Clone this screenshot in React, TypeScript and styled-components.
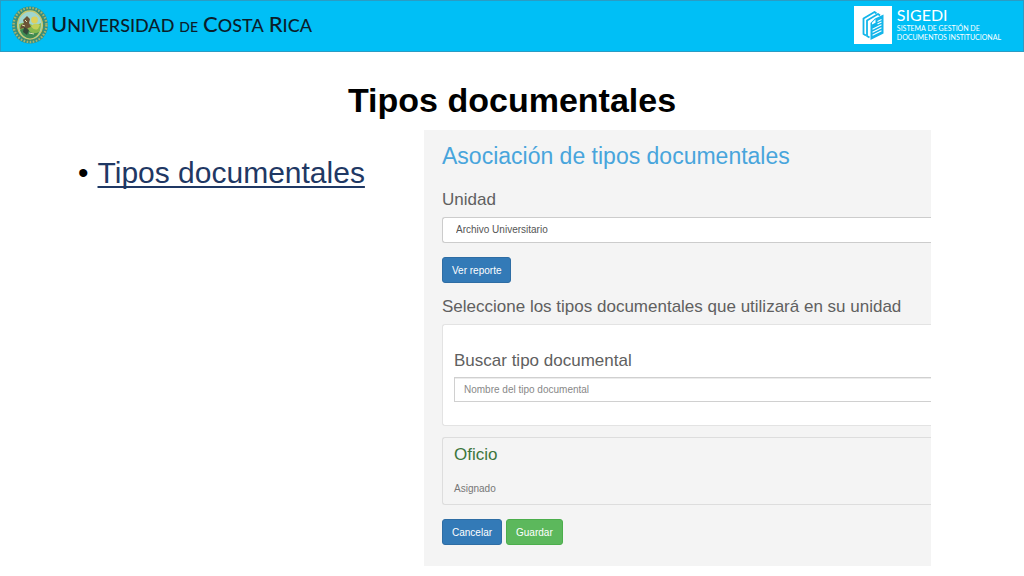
import React from "react";
import styled, { createGlobalStyle } from "styled-components";

const GlobalStyle = createGlobalStyle`
  *, *::before, *::after { box-sizing: border-box; }
  body {
    margin: 0;
    background: #ffffff;
    color: #000000;
    font-family: "Liberation Sans", Arial, sans-serif;
  }
`;

const Header = styled.header`
  display: flex;
  align-items: center;
  justify-content: space-between;
  height: 52px;
  padding: 0 22px 2px 10px;
  background: #00bff6;
  border: 1px solid #2a9cc4;
`;

const University = styled.div`
  display: flex;
  align-items: center;
  gap: 2px;
`;

const UniversityName = styled.div`
  display: flex;
  align-items: baseline;
  gap: 5px;
  font-family: Lato, sans-serif;
  font-size: 18px;
  font-weight: 500;
  line-height: 28px;
  color: #0b1e2b;
  white-space: nowrap;
`;

const Initial = styled.span`
  font-size: 22px;
`;

const Particle = styled.span`
  font-size: 14px;
`;

const System = styled.div`
  display: flex;
  align-items: center;
  gap: 5px;
  color: #ffffff;
  font-family: Lato, sans-serif;
`;

const SystemText = styled.div`
  display: flex;
  flex-direction: column;
  margin-bottom: 2px;
  font-size: 7px;
  line-height: 9px;
  white-space: nowrap;
`;

const SystemName = styled.span`
  font-size: 16px;
  line-height: 18px;
`;

const SlideTitle = styled.h1`
  margin: 28px 0 10px;
  font-size: 34px;
  line-height: 40px;
  font-weight: 700;
  text-align: center;
`;

const Content = styled.main`
  display: grid;
  grid-template-columns: minmax(0, 424fr) minmax(0, 507fr) minmax(0, 93fr);
  align-items: start;
`;

const Topics = styled.ul`
  margin: 0;
  padding: 25px 0 0 78px;
  list-style: none;
`;

const Topic = styled.li`
  display: flex;
  gap: 9px;
  font-size: 30px;
  line-height: 36px;
  white-space: nowrap;
`;

const TopicLink = styled.a`
  color: #1f3864;
  text-decoration: underline;
  text-decoration-thickness: 2px;
  text-underline-offset: 3px;
  text-decoration-skip-ink: none;
`;

const Panel = styled.form`
  padding: 12px 0 21px 18px;
  background: #f4f4f4;
  color: #606060;
  overflow: hidden;
`;

const PanelTitle = styled.h2`
  margin: 0 0 18px;
  font-size: 23px;
  line-height: 28px;
  font-weight: 400;
  color: #48a5dc;
  white-space: nowrap;
`;

const Label = styled.label`
  display: block;
  margin-bottom: 5px;
  font-size: 17px;
  line-height: 24px;
  white-space: nowrap;
`;

const SectionTitle = styled.h3<{ $tone?: string }>`
  margin: 0 0 5px;
  font-size: 17px;
  line-height: 24px;
  font-weight: 400;
  color: ${(p) => p.$tone ?? "inherit"};
  white-space: nowrap;
`;

const UnitSelect = styled.select`
  display: block;
  width: 100%;
  height: 26px;
  padding: 0 13px 1px;
  appearance: none;
  background: #ffffff;
  border: 1px solid #cccccc;
  border-right: 0;
  border-radius: 3px 0 0 3px;
  color: #555555;
  font: 10px "Liberation Sans", Arial, sans-serif;
`;

const SearchInput = styled.input`
  display: block;
  width: 100%;
  height: 25px;
  padding: 0 9px;
  background: #ffffff;
  border: 1px solid #d0d0d0;
  border-right: 0;
  border-radius: 0;
  box-shadow: inset 0 1px 0 #ececec;
  color: #555555;
  font: 10px "Liberation Sans", Arial, sans-serif;
  &::placeholder { color: #888888; opacity: 1; }
`;

const Actions = styled.div`
  display: flex;
  gap: 4px;
  margin: 14px 0 12px;
  &:last-child { margin-bottom: 0; }
`;

const Button = styled.button<{ $kind?: "success" }>`
  height: 26px;
  padding: 0 9px;
  border: 1px solid ${(p) => (p.$kind ? "#4cae4c" : "#2e6da4")};
  border-radius: 3px;
  background: ${(p) => (p.$kind ? "#5cb85c" : "#337ab7")};
  color: #ffffff;
  font: 10px "Liberation Sans", Arial, sans-serif;
`;

const SearchCard = styled.section`
  padding: 24px 0 23px 11px;
  background: #ffffff;
  border: 1px solid #e3e3e3;
  border-right: 0;
  border-radius: 3px 0 0 3px;

  ${Label} {
    margin-bottom: 4px;
  }
`;

const TypeCard = styled.section`
  margin-top: 11px;
  padding: 5px 0 8px 11px;
  border: 1px solid #dddddd;
  border-right: 0;
  border-radius: 3px 0 0 3px;
`;

const Status = styled.p`
  margin: 15px 0 0;
  font-size: 10px;
  line-height: 14px;
  color: #777777;
`;

const Seal = () => (
  <svg width="38" height="38" viewBox="0 0 38 38" aria-hidden="true">
    <ellipse cx="19" cy="19" rx="18" ry="18.6" fill="#2f8f8c" />
    <ellipse cx="19" cy="19" rx="16.4" ry="17" fill="none" stroke="#a9b46a" strokeWidth="2.4" strokeDasharray="1.6 1.5" />
    <ellipse cx="19" cy="19" rx="14" ry="15" fill="none" stroke="#4f8a5c" strokeWidth="2" strokeDasharray="2 1.2" />
    <ellipse cx="19" cy="19" rx="12.4" ry="14" fill="#9fd6cf" stroke="#c9c870" strokeWidth="1.4" />
    <path d="M8 18q6 -3 11 0t11 -1q0 9 -4 12.500q-7 5 -14 0q-4 -4 -4 -11.500z" fill="#86b84e" />
    <path d="M9 24q5 -3 9 1t10 1q-3 6 -9 6.500q-7 -.5 -10 -8.500z" fill="#3f8a52" />
    <circle cx="23.500" cy="14" r="3.400" fill="#dfd15a" />
    <path d="M20 20q4 -4 9 -1l-2 4q-4 2 -7 -3z" fill="#c5cf58" />
    <path d="M16 10l3 3l-1 4l2 4l-3 1l-2 3l-2 -3l-4 1l1 -4l3 -2l-1 -3z" fill="#6b5436" />
    <path d="M13 21l5 3l-2 5l-4 -3z" fill="#354a3a" />
    <path d="M14 14l2 2M11 19l3 1M18 27l5 1" stroke="#e4e0b0" strokeWidth="1" />
  </svg>
);

const Documents = () => (
  <svg width="38" height="38" viewBox="0 0 38 38" aria-hidden="true">
    <rect width="38" height="38" fill="#fff" />
    <g fill="none" stroke="#12b5ea" strokeWidth="1.800" strokeLinejoin="round">
      <path d="M12 29.500l-2.500 -1.500V12.500l11 -6.500l2 1.500" />
      <path d="M15.500 31.500l-2.500 -1.500V14.500l11 -6.500l2 1.500" />
    </g>
    <path d="M16.500 17l4.500 -4.500l8.500 -4v19l-13 6.500z" fill="#12b5ea" />
    <path d="M18 16.800l3.500 -3.500v3.500l-3.500 1.800z" fill="#fff" />
    <path d="M23.500 15.500l4 -2M23.500 18l4 -2M18.500 23.300l9 -4.500M18.500 26.300l9 -4.500M18.500 29.300l9 -4.500" stroke="#fff" strokeWidth="1.100" />
  </svg>
);

export default function App() {
  return (
    <>
      <GlobalStyle />
      <Header>
        <University>
          <Seal />
          <UniversityName>
            <span><Initial>U</Initial>NIVERSIDAD</span>
            <Particle>DE</Particle>
            <span><Initial>C</Initial>OSTA</span>
            <span><Initial>R</Initial>ICA</span>
          </UniversityName>
        </University>
        <System>
          <Documents />
          <SystemText>
            <SystemName>SIGEDI</SystemName>
            <span>SISTEMA DE GESTIÓN DE</span>
            <span>DOCUMENTOS INSTITUCIONAL</span>
          </SystemText>
        </System>
      </Header>
      <SlideTitle>Tipos documentales</SlideTitle>
      <Content>
        <Topics>
          <Topic>
            <span>•</span>
            <TopicLink href="#tipos">Tipos documentales</TopicLink>
          </Topic>
        </Topics>
        <Panel id="tipos" onSubmit={(e) => e.preventDefault()}>
          <PanelTitle>Asociación de tipos documentales</PanelTitle>
          <Label htmlFor="unidad">Unidad</Label>
          <UnitSelect id="unidad">
            <option>Archivo Universitario</option>
          </UnitSelect>
          <Actions>
            <Button type="button">Ver reporte</Button>
          </Actions>
          <SectionTitle>Seleccione los tipos documentales que utilizará en su unidad</SectionTitle>
          <SearchCard>
            <Label htmlFor="buscar">Buscar tipo documental</Label>
            <SearchInput id="buscar" type="text" placeholder="Nombre del tipo documental" />
          </SearchCard>
          <TypeCard>
            <SectionTitle $tone="#3c763d">Oficio</SectionTitle>
            <Status>Asignado</Status>
          </TypeCard>
          <Actions>
            <Button type="button">Cancelar</Button>
            <Button type="submit" $kind="success">Guardar</Button>
          </Actions>
        </Panel>
      </Content>
    </>
  );
}
